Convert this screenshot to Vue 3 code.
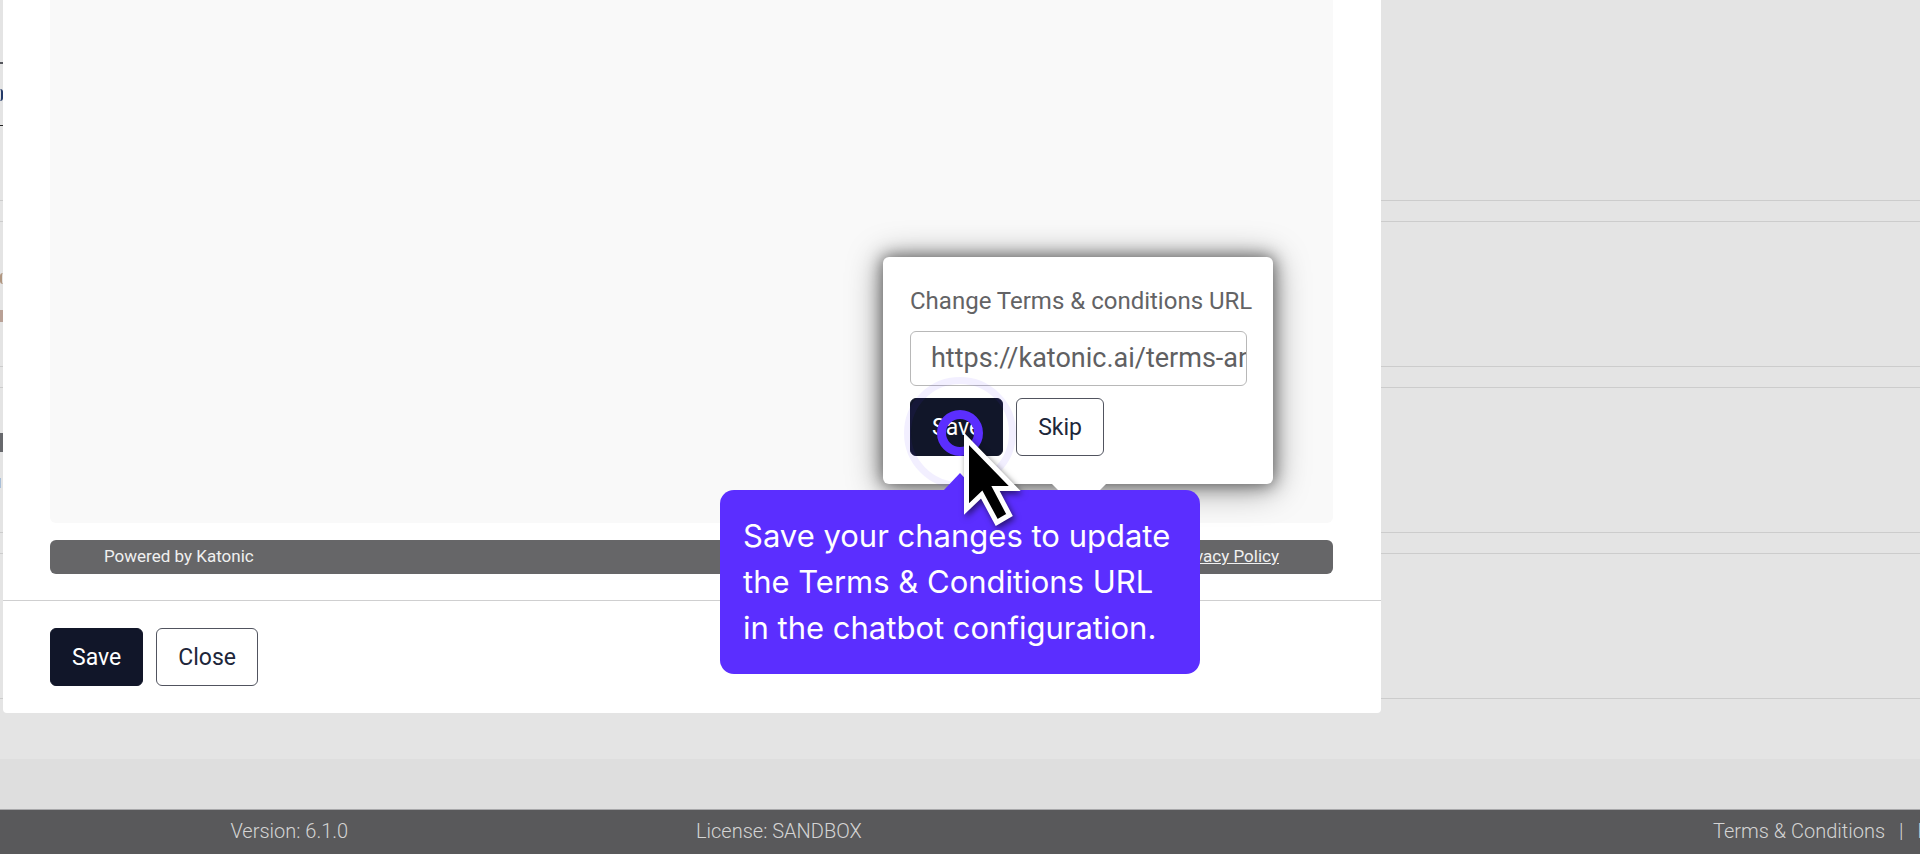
<script setup>
import { ref } from 'vue'

const termsUrl = ref('https://katonic.ai/terms-and-conditions')
const rows = ['first', 'second', 'third', 'fourth']
</script>

<template>
  <div class="page">
    <main class="content">
      <div class="cards">
        <section v-for="row in rows" :key="row" class="card" :class="row">
          <i class="edge edge-a"></i>
          <i class="edge edge-b"></i>
          <i class="edge edge-c"></i>
        </section>
      </div>

      <div class="modal" role="dialog" aria-label="Chatbot configuration">
        <div class="modal-body">
          <div class="chat"></div>
          <div class="powered">
            <span>Powered by Katonic</span>
            <a href="#">Privacy Policy</a>
          </div>
        </div>
        <div class="modal-actions">
          <button type="button" class="btn primary">Save</button>
          <button type="button" class="btn">Close</button>
        </div>

        <form class="popup" @submit.prevent>
          <label for="terms-url">Change Terms &amp; conditions URL</label>
          <input id="terms-url" v-model="termsUrl" type="text" />
          <div class="popup-actions">
            <button type="submit" class="btn primary">Save</button>
            <button type="button" class="btn">Skip</button>
          </div>
          <div class="guide">
            <span class="halo"></span>
            <span class="ring"></span>
            <p class="tip">Save your changes to update the Terms &amp; Conditions URL in&nbsp;the chatbot configuration.</p>
            <svg class="cursor" viewBox="0 0 72 104" width="72" height="104" aria-hidden="true">
              <path d="M6.500 9 V79 L21.700 64.500 L36.700 92.500 L49.500 85 L35.500 58.500 H54.700 Z" fill="#000" stroke="#fff" stroke-width="5" />
            </svg>
          </div>
        </form>
      </div>
    </main>

    <div class="strip"></div>
    <footer class="footer">
      <span class="version">Version: 6.1.0</span>
      <span class="license">License: SANDBOX</span>
      <nav>
        <a href="#">Terms &amp; Conditions</a>
        <span>|</span>
        <a href="#">Privacy Policy</a>
      </nav>
    </footer>
  </div>
</template>

<style>
body {
  margin: 0;
  background: #e4e4e4;
}
</style>

<style scoped>
* {
  box-sizing: border-box;
}
.page {
  display: flex;
  flex-direction: column;
  min-height: 100vh;
  overflow: hidden;
  font-family: Roboto, "Liberation Sans", sans-serif;
}
.content {
  position: relative;
  flex: 1;
  min-height: 759px;
}
.cards {
  display: flex;
  flex-direction: column;
  gap: 20px;
}
.card {
  position: relative;
  height: 146px;
  border-top: 1px solid #cccccc;
  border-bottom: 1px solid #cccccc;
}
.card.first {
  height: 201px;
  border-top: 0;
}
.edge {
  position: absolute;
  left: 0;
  width: 3px;
  display: none;
}
.first .edge {
  display: block;
}
.first .edge-a {
  top: 62px;
  height: 2px;
  background: #55565c;
}
.first .edge-b {
  top: 89px;
  height: 12px;
  border-right: 2px solid #243a68;
  border-radius: 0 6px 6px 0;
}
.first .edge-c {
  top: 125px;
  height: 1px;
  background: #222;
}
.second .edge-a,
.second .edge-b,
.third .edge-a,
.third .edge-b {
  display: block;
}
.second .edge-a {
  top: 51px;
  height: 11px;
  border-left: 2px solid #b09680;
  border-radius: 6px 0 0 6px;
}
.second .edge-b {
  top: 88px;
  height: 12px;
  background: #b9a196;
}
.third .edge-a {
  top: 45px;
  height: 19px;
  background: #67686c;
}
.third .edge-b {
  top: 90px;
  width: 1px;
  height: 10px;
  background: #a9bfd8;
}
.modal {
  position: absolute;
  top: 0;
  left: 3px;
  right: 539px;
  background: #fff;
  border-radius: 0 0 4px 4px;
}
.modal-body {
  display: flex;
  flex-direction: column;
  gap: 17px;
  padding: 0 48px 26px 47px;
  border-bottom: 1px solid #cfcfd0;
}
.chat {
  height: 523px;
  background: #f9f9f9;
  border-radius: 0 0 6px 6px;
}
.powered {
  display: flex;
  align-items: center;
  justify-content: space-between;
  height: 34px;
  padding: 0 54px 2px;
  border-radius: 6px;
  background: #666668;
  color: #f0f0f0;
  font-size: 17px;
}
.powered a {
  color: inherit;
}
.modal-actions,
.popup-actions {
  display: flex;
  gap: 13px;
}
.modal-actions {
  padding: 27px 47px;
}
.btn {
  height: 58px;
  padding: 0 21px;
  border: 1px solid #51545f;
  border-radius: 6px;
  background: #fff;
  color: #20263a;
  font-family: inherit;
  font-size: 23px;
}
.btn.primary {
  background: #111629;
  border-color: #111629;
  color: #fff;
}
.popup {
  position: absolute;
  top: 257px;
  right: 108px;
  width: 390px;
  height: 227px;
  padding: 29px 26px 26px 27px;
  border-radius: 6px;
  background: #fff;
  box-shadow: 0 0 16px 1px rgba(0, 0, 0, 0.5), 0 3px 34px 2px rgba(0, 0, 0, 0.4);
}
.popup::after {
  content: "";
  position: absolute;
  top: 227px;
  left: 169px;
  width: 54px;
  height: 27px;
  background: #fff;
  clip-path: polygon(0 0, 100% 0, 50% 100%);
}
.popup label {
  display: block;
  line-height: 30px;
  color: #636365;
  font-size: 24px;
  white-space: nowrap;
}
.popup input {
  display: block;
  width: 100%;
  height: 55px;
  margin: 15px 0 12px;
  padding: 0 0 2px 20px;
  border: 1px solid #b8b8b8;
  border-radius: 6px;
  outline: 0;
  background: #fff;
  color: #606062;
  font-family: inherit;
  font-size: 27px;
}
.guide {
  position: absolute;
  top: 176px;
  left: 77px;
  z-index: 1;
}
.halo,
.ring {
  position: absolute;
  border-radius: 50%;
}
.halo {
  top: -56px;
  left: -56px;
  width: 112px;
  height: 112px;
  border: 7px solid rgba(91, 46, 255, 0.08);
}
.ring {
  top: -23px;
  left: -23px;
  width: 46px;
  height: 46px;
  border: 9px solid #5b2eff;
}
.tip {
  position: absolute;
  top: 57px;
  left: -240px;
  width: 480px;
  margin: 0;
  padding: 23px;
  border-radius: 14px;
  background: #5b2eff;
  color: #fff;
  font-family: Inter, "Liberation Sans", sans-serif;
  font-size: 31px;
  line-height: 46px;
}
.tip::before {
  content: "";
  position: absolute;
  top: -17px;
  left: 223px;
  width: 34px;
  height: 18px;
  background: #5b2eff;
  clip-path: polygon(50% 0, 100% 100%, 0 100%);
}
.cursor {
  position: absolute;
  top: -3px;
  left: 0;
  filter: drop-shadow(2px 3px 3px rgba(0, 0, 0, 0.55));
}
.strip {
  height: 50px;
  background: #dedede;
}
.footer {
  display: flex;
  align-items: center;
  height: 45px;
  padding: 0 0 2px 12%;
  border-top: 1px solid #a8a8aa;
  background: #59595b;
  color: #d4d4d4;
  font-size: 20px;
  font-weight: 300;
  white-space: nowrap;
}
.license {
  margin-left: 18vw;
}
.version {
  width: 120px;
}
.footer nav {
  display: flex;
  gap: 14px;
  width: 207px;
  margin-left: auto;
}
.footer a {
  color: inherit;
  text-decoration: none;
}
</style>
